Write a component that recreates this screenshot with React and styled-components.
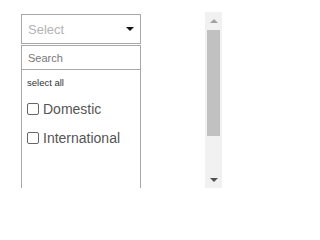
import React from "react";
import styled, { createGlobalStyle } from "styled-components";

const Global = createGlobalStyle`
  html, body { margin: 0; padding: 0; background: #fff; }
  body { font-family: "Liberation Sans", Arial, sans-serif; }
`;

const Page = styled.div`
  display: flex;
  align-items: flex-start;
  padding: 12px 0 0 21px;
  gap: 64px;
`;

const Dropdown = styled.div`
  margin-top: 2px;
  width: 120px;
  display: flex;
  flex-direction: column;
`;

const SelectBox = styled.div`
  box-sizing: border-box;
  height: 30px;
  border: 1px solid #a8a8a8;
  display: flex;
  align-items: center;
  justify-content: space-between;
  padding: 0 6px 0 6px;
`;

const Placeholder = styled.span`
  font-size: 13px;
  color: #b3b3b3;
`;

const Caret = styled.span`
  width: 0;
  height: 0;
  border-left: 4px solid transparent;
  border-right: 4px solid transparent;
  border-top: 4px solid #111;
`;

const SearchInput = styled.input`
  box-sizing: border-box;
  margin: 1px 0 0 0;
  height: 25px;
  width: 120px;
  border: 1px solid #a8a8a8;
  padding: 0 6px;
  font-family: "Liberation Sans", Arial, sans-serif;
  font-size: 11px;
  color: #333;
  outline: none;
  &::placeholder { color: #777; }
`;

const List = styled.div`
  box-sizing: border-box;
  height: 118px;
  border-left: 1px solid #a8a8a8;
  border-right: 1px solid #a8a8a8;
  display: flex;
  flex-direction: column;
`;

const SelectAll = styled.div`
  height: 24px;
  display: flex;
  align-items: center;
  padding-left: 5px;
  font-size: 9.5px;
  color: #333;
`;

const Option = styled.label`
  height: 29px;
  display: flex;
  align-items: center;
  gap: 4px;
  padding-left: 5px;
  font-size: 14px;
  color: #555;
`;

const Box = styled.span`
  box-sizing: border-box;
  width: 12px;
  height: 12px;
  border: 1px solid #666;
  border-radius: 2px;
  background: #fff;
`;

const Scrollbar = styled.div`
  width: 17px;
  height: 176px;
  background: #f1f1f1;
  display: flex;
  flex-direction: column;
  align-items: center;
`;

const ArrowBtn = styled.div`
  height: 17px;
  width: 17px;
  display: flex;
  align-items: center;
  justify-content: center;
`;

const Triangle = styled.span`
  width: 0;
  height: 0;
  border-left: 4px solid transparent;
  border-right: 4px solid transparent;
  ${(p) =>
    p.$up
      ? `border-bottom: 4px solid #a3a3a3;`
      : `border-top: 4px solid #505050;`}
`;

const Track = styled.div`
  flex: 1;
  width: 100%;
  display: flex;
  justify-content: center;
`;

const Thumb = styled.div`
  width: 13px;
  height: 106px;
  background: #c1c1c1;
  margin-top: 1px;
`;

export default function App() {
  return (
    <>
      <Global />
      <Page>
        <Dropdown>
          <SelectBox>
            <Placeholder>Select</Placeholder>
            <Caret />
          </SelectBox>
          <SearchInput placeholder="Search" />
          <List>
            <SelectAll>select all</SelectAll>
            <Option>
              <Box />
              Domestic
            </Option>
            <Option>
              <Box />
              International
            </Option>
          </List>
        </Dropdown>
        <Scrollbar>
          <ArrowBtn>
            <Triangle $up />
          </ArrowBtn>
          <Track>
            <Thumb />
          </Track>
          <ArrowBtn>
            <Triangle />
          </ArrowBtn>
        </Scrollbar>
      </Page>
    </>
  );
}
